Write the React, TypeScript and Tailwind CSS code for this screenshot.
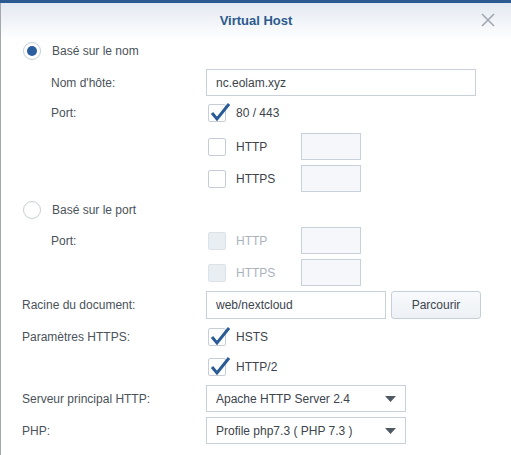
import React from "react";

const FONT = { fontFamily: '"Liberation Sans", Arial, sans-serif' };

function Check({ checked = false, disabled = false }: { checked?: boolean; disabled?: boolean }) {
  return (
    <div
      className={`relative w-[18px] h-[18px] rounded-[2px] border shrink-0 ${
        disabled ? "bg-[#e9eef3] border-[#dce2e9]" : "bg-white border-[#c6cdd6]"
      }`}
    >
      {checked && (
        <svg className="absolute left-[1px] top-[-3px]" width="20" height="20" viewBox="0 0 20 20">
          <path d="M2 11 L7 17 L19 2" fill="none" stroke="#2b5b94" strokeWidth="3" strokeLinejoin="miter" />
        </svg>
      )}
    </div>
  );
}

function Radio({ checked = false }: { checked?: boolean }) {
  return (
    <div className="w-[18px] h-[18px] rounded-full border border-[#c6cdd6] bg-white flex items-center justify-center shrink-0">
      {checked && <div className="w-[10px] h-[10px] rounded-full bg-[#2b5e9e]" />}
    </div>
  );
}

function SmallInput() {
  return <div className="w-[60px] h-[27px] border border-[#c8d0da] bg-[#f5f7fa]" />;
}

function Select({ value }: { value: string }) {
  return (
    <div className="w-[200px] h-[27px] border border-[#c8d0da] bg-white flex items-center justify-between pl-[9px] pr-[9px] text-[#3c444c]">
      <span>{value}</span>
      <svg width="11" height="6" viewBox="0 0 11 6">
        <path d="M0 0 H11 L5.5 6 Z" fill="#4f5963" />
      </svg>
    </div>
  );
}

function PortRow({
  label,
  side,
  disabled = false,
  mt,
}: {
  label: string;
  side?: string;
  disabled?: boolean;
  mt: string;
}) {
  return (
    <div className={`flex items-center h-[27px] ${mt}`}>
      <span className="pl-[50px] w-[207px]">{side}</span>
      <Check disabled={disabled} />
      <span className={`ml-[10px] w-[65px] ${disabled ? "text-[#aab2bb]" : "text-[#3c444c]"}`}>{label}</span>
      <SmallInput />
    </div>
  );
}

export default function App() {
  return (
    <div className="w-[511px] h-[455px] bg-white overflow-hidden text-[12px] text-[#4a525a]" style={FONT}>
      <div className="h-[3px] bg-[#2b5a90]" />
      <div className="h-[452px] border-l border-[#a3a8ae] flex flex-col">
        {/* header */}
        <div className="h-[37px] bg-gradient-to-b from-[#e3e9f1] to-white flex items-center justify-center relative shrink-0">
          <span className="text-[13px] font-bold text-[#2c5a8e] mt-[-1px]">Virtual Host</span>
          <svg className="absolute left-[480px] top-[10px]" width="14" height="14" viewBox="0 0 14 14">
            <path d="M1 1 L13 13 M13 1 L1 13" stroke="#a0a8b1" strokeWidth="1.6" />
          </svg>
        </div>

        <div className="flex flex-col">
          <div className="flex items-center h-[18px] mt-[2px] pl-[22px]">
            <Radio checked />
            <span className="ml-[11px]">Basé sur le nom</span>
          </div>

          <div className="flex items-center h-[27px] mt-[9px]">
            <span className="pl-[50px] w-[205px]">Nom d'hôte:</span>
            <div className="w-[270px] h-[27px] border border-[#c8d0da] bg-white flex items-center pl-[9px] text-[#3c444c]">
              nc.eolam.xyz
            </div>
          </div>

          <div className="flex items-center h-[18px] mt-[8px]">
            <span className="pl-[50px] w-[207px]">Port:</span>
            <Check checked />
            <span className="ml-[10px] text-[#3c444c]">80 / 443</span>
          </div>

          <PortRow label="HTTP" mt="mt-[11px]" />
          <PortRow label="HTTPS" mt="mt-[5px]" />

          <div className="flex items-center h-[18px] mt-[9px] pl-[22px]">
            <Radio />
            <span className="ml-[11px]">Basé sur le port</span>
          </div>

          <PortRow label="HTTP" side="Port:" disabled mt="mt-[8px]" />
          <PortRow label="HTTPS" disabled mt="mt-[5px]" />

          <div className="flex items-center h-[28px] mt-[5px]">
            <span className="pl-[21px] w-[205px]">Racine du document:</span>
            <div className="w-[180px] h-[28px] border border-[#c8d0da] bg-white flex items-center pl-[9px] text-[#3c444c]">
              web/nextcloud
            </div>
            <button className="ml-[5px] w-[90px] h-[28px] rounded-[3px] border border-[#c6ced8] bg-gradient-to-b from-[#f8fafc] to-[#edf1f5] text-[#3c444c]">
              Parcourir
            </button>
          </div>

          <div className="flex items-center h-[18px] mt-[9px]">
            <span className="pl-[21px] w-[207px]">Paramètres HTTPS:</span>
            <Check checked />
            <span className="ml-[10px] text-[#3c444c]">HSTS</span>
          </div>

          <div className="flex items-center h-[18px] mt-[12px] pl-[207px]">
            <Check checked />
            <span className="ml-[10px] text-[#3c444c]">HTTP/2</span>
          </div>

          <div className="flex items-center h-[27px] mt-[9px]">
            <span className="pl-[21px] w-[205px]">Serveur principal HTTP:</span>
            <Select value="Apache HTTP Server 2.4" />
          </div>

          <div className="flex items-center h-[27px] mt-[5px]">
            <span className="pl-[21px] w-[205px]">PHP:</span>
            <Select value="Profile php7.3 ( PHP 7.3 )" />
          </div>
        </div>
      </div>
    </div>
  );
}
